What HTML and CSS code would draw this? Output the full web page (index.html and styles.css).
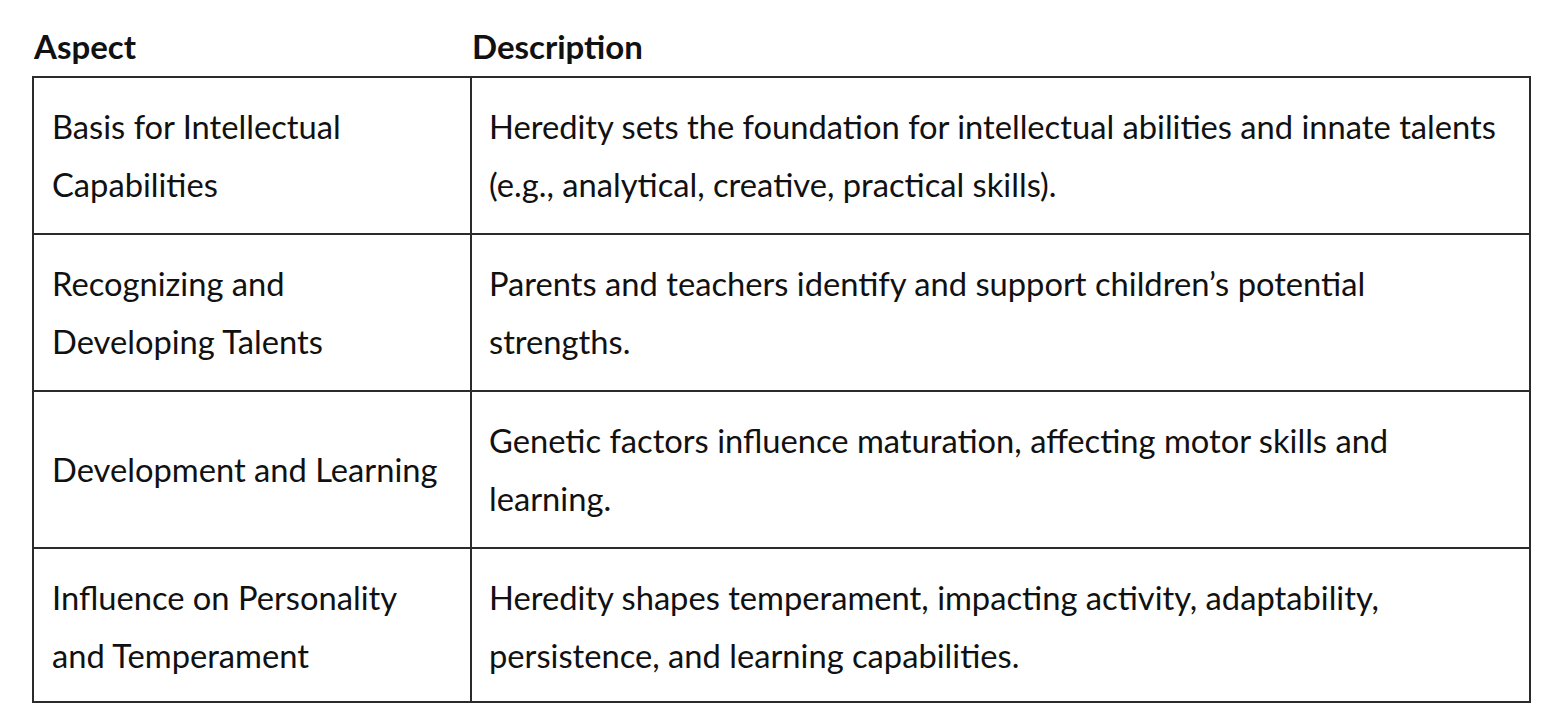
FILE: index.html
```html
<!DOCTYPE html>
<html>
<head>
<meta charset="utf-8">
<link rel="stylesheet" href="styles.css">
</head>
<body>
<table class="grid">
  <thead>
    <tr>
      <th class="col-aspect">Aspect</th>
      <th class="col-desc">Description</th>
    </tr>
  </thead>
  <tbody>
    <tr>
      <td>Basis for Intellectual Capabilities</td>
      <td>Heredity sets the foundation for intellectual abilities and innate talents (e.g., analytical, creative, practical skills).</td>
    </tr>
    <tr>
      <td>Recognizing and Developing Talents</td>
      <td>Parents and teachers identify and support children’s potential strengths.</td>
    </tr>
    <tr>
      <td>Development and Learning</td>
      <td>Genetic factors influence maturation, affecting motor skills and learning.</td>
    </tr>
    <tr>
      <td>Influence on Personality and Temperament</td>
      <td>Heredity shapes temperament, impacting activity, adaptability, persistence, and learning capabilities.</td>
    </tr>
  </tbody>
</table>
</body>
</html>
```
FILE: styles.css
```css
html, body {
  margin: 0;
  padding: 0;
  background: #ffffff;
}
body {
  padding: 24px 17px 0 32px;
  font-family: Lato, "Open Sans", sans-serif;
  color: #111111;
}
.grid {
  border-collapse: collapse;
  width: 1499px;
  table-layout: fixed;
}
.col-aspect { width: 436px; }
.grid th {
  text-align: left;
  font-weight: 700;
  font-size: 33px;
  line-height: 44px;
  padding: 0 1px 8px;
  border: none;
}
.grid td {
  font-size: 32.7px;
  line-height: 58px;
  padding: 20px 18px 19px;
  border: 2px solid #2b2b2b;
  vertical-align: middle;
}
.grid td + td {
  padding-left: 17px;
}
.grid tbody tr:last-child td {
  padding-bottom: 16px;
}
```
